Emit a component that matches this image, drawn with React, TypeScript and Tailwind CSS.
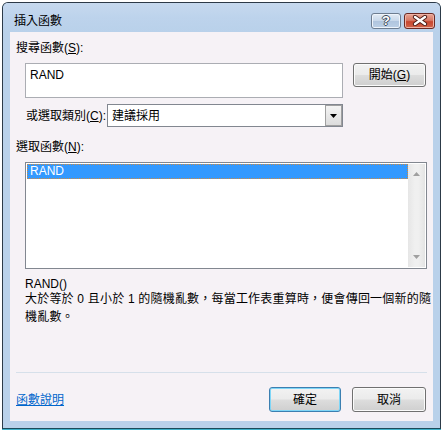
import React from "react";

const font = { fontFamily: '"Liberation Sans", "Noto Sans CJK TC", sans-serif' };

function WinButton({ children, focused }: { children: React.ReactNode; focused?: boolean }) {
  return (
    <div
      className={
        "flex items-center justify-center rounded-[3px] border text-[12px] text-black " +
        (focused
          ? "border-[#3c7fb1] shadow-[inset_0_0_0_1px_#7fd6f7]"
          : "border-[#707070] shadow-[inset_0_0_0_1px_#fbfbfb]") +
        " bg-[linear-gradient(to_bottom,#f2f2f2_0%,#ebebeb_48%,#dddddd_52%,#cfcfcf_100%)]"
      }
      style={{ width: "100%", height: "100%" }}
    >
      {children}
    </div>
  );
}

export default function App() {
  return (
    <div className="w-[443px] h-[431px] bg-white pt-[2px] pl-[2px]" style={font}>
      <div className="w-[439px] h-[427px] border border-[#2c3a48] border-b-[#1c4a5a] rounded-t-[6px] bg-[#b9d1ea] flex flex-col shadow-[0_1px_0_#3fb0c8]">
        {/* title bar */}
        <div className="h-[29px] flex items-center pt-[6px] pl-[11px] pr-[5px] rounded-t-[5px] bg-[linear-gradient(to_bottom,#c6d9ef_0%,#bdd3ec_50%,#b9d1ea_100%)]">
          <div className="text-[12px] leading-[16px] text-black flex-1">插入函數</div>
          <div className="flex gap-[3px] items-center">
            <div className="w-[30px] h-[16px] rounded-[3px] border border-[#6d7d90] bg-[linear-gradient(to_bottom,#e2ebf5_0%,#c8d8ea_48%,#b0c5de_52%,#bcd0e6_100%)] shadow-[inset_0_0_0_1px_#eef4fb] flex items-center justify-center">
              <span className="text-[13px] leading-[13px] font-bold text-white [text-shadow:-1px_0_#3c4a5a,1px_0_#3c4a5a,0_-1px_#3c4a5a,0_1px_#3c4a5a]">?</span>
            </div>
            <div className="w-[31px] h-[16px] rounded-[3px] border border-[#6b2a24] bg-[linear-gradient(to_bottom,#e8a493_0%,#d77a66_45%,#c7452f_55%,#d2664c_100%)] shadow-[inset_0_0_0_1px_#eeb3a6] flex items-center justify-center">
              <svg width="16" height="11" viewBox="0 0 16 11">
                <path d="M3 2 L13 9 M13 2 L3 9" stroke="#4a1a14" strokeWidth="4.2" strokeLinecap="round" />
                <path d="M3 2 L13 9 M13 2 L3 9" stroke="#ffffff" strokeWidth="2.4" strokeLinecap="round" />
              </svg>
            </div>
          </div>
        </div>

        {/* content */}
        <div className="mx-[7px] h-[389px] bg-[#f6f2f6] flex flex-col pl-[6px] pr-[6px] text-[12px] text-black">
          <div className="mt-[8px] leading-[16px]">
            搜尋函數(<span className="underline">S</span>):
          </div>
          <div className="mt-[7px] flex">
            <div className="ml-[9px] w-[318px] h-[35px] bg-white border border-[#abadb3] px-[4px] pt-[3px] leading-[16px]">
              RAND
            </div>
            <div className="ml-[10px] w-[73px] h-[24px]">
              <WinButton>
                開始(<span className="underline">G</span>)
              </WinButton>
            </div>
          </div>
          <div className="mt-[6px] flex items-center">
            <div className="ml-[10px] w-[81px] leading-[16px]">
              或選取類別(<span className="underline">C</span>):
            </div>
            <div className="w-[236px] h-[23px] bg-white border border-[#828790] flex items-center">
              <div className="flex-1 pl-[4px] leading-[16px]">建議採用</div>
              <div className="w-[17px] h-[21px] mr-[0px] border border-[#a0a0a0] bg-[linear-gradient(to_bottom,#f4f4f4,#dcdcdc)] flex items-center justify-center">
                <svg width="7" height="4" viewBox="0 0 7 4">
                  <polygon points="0,0 7,0 3.5,4" fill="#000" />
                </svg>
              </div>
            </div>
          </div>
          <div className="mt-[12px] leading-[16px]">
            選取函數(<span className="underline">N</span>):
          </div>
          <div className="mt-[7px] ml-[9px] w-[402px] h-[107px] bg-white border border-[#828790] flex p-[1px]">
            <div className="flex-1">
              <div className="h-[15px] bg-[#3399ff] border border-dotted border-[#d08a40] text-white leading-[13px] pl-[2px]">
                RAND
              </div>
            </div>
            <div className="w-[17px] bg-[linear-gradient(to_right,#e6e6e6,#f0f0f0_40%,#f0f0f0_60%,#e4e4e4)] flex flex-col items-center justify-between py-[8px]">
              <svg width="7" height="4" viewBox="0 0 7 4">
                <polygon points="3.5,0 7,4 0,4" fill="#a0a0a0" />
              </svg>
              <svg width="7" height="4" viewBox="0 0 7 4">
                <polygon points="0,0 7,0 3.5,4" fill="#a0a0a0" />
              </svg>
            </div>
          </div>
          <div className="mt-[7px] ml-[9px] leading-[16px]">RAND()</div>
          <div className="ml-[9px] leading-[18px] mt-[-2px] tracking-[0.2px] whitespace-nowrap">
            大於等於 0 且小於 1 的隨機亂數，每當工作表重算時，便會傳回一個新的隨
            <br />
            機亂數。
          </div>
          <div className="mt-auto h-px bg-[#d6e0ea] w-[411px]" />
          <div className="mt-[14px] mb-[9px] flex items-center h-[25px]">
            <div className="flex-1 text-[#0066cc] underline leading-[16px]">函數說明</div>
            <div className="w-[72px] h-[25px]">
              <WinButton focused>確定</WinButton>
            </div>
            <div className="ml-[11px] mr-[1px] w-[74px] h-[25px]">
              <WinButton>取消</WinButton>
            </div>
          </div>
        </div>
      </div>
    </div>
  );
}
